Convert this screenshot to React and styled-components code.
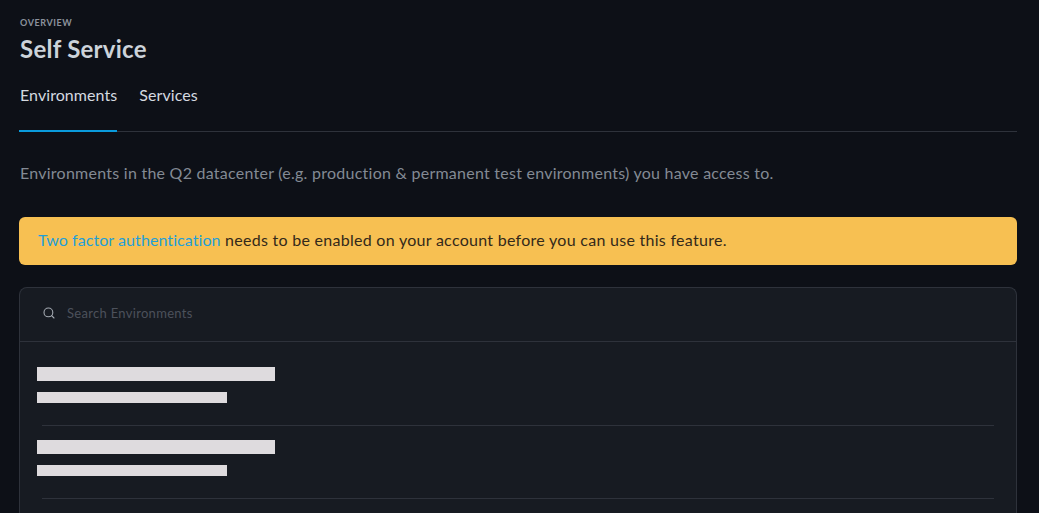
import React from 'react'
import styled, { createGlobalStyle } from 'styled-components'

const GlobalStyle = createGlobalStyle`
  html, body {
    margin: 0;
    height: 100%;
    overflow: hidden;
    background: #0d1017;
    font-family: 'Lato', 'Liberation Sans', sans-serif;
  }
`

const Page = styled.div`
  height: 100vh;
  box-sizing: border-box;
  padding: 17px 22px 0 19px;
  display: flex;
  flex-direction: column;
`

const Eyebrow = styled.div`
  padding-left: 1px;
  font-size: 9px;
  line-height: 12px;
  font-weight: 700;
  letter-spacing: 0.6px;
  color: #8b929c;
`

const Title = styled.h1`
  margin: 4px 0 0;
  padding-left: 1px;
  font-size: 24px;
  line-height: 32px;
  font-weight: 700;
  letter-spacing: 0.25px;
  color: #ccd3da;
`

const Tabs = styled.div`
  display: flex;
  gap: 21px;
  margin-top: 13px;
  border-bottom: 1px solid #2e323b;
`

const Tab = styled.div`
  height: 54px;
  box-sizing: border-box;
  padding: 6px 0 0 1px;
  margin-bottom: -1px;
  font-size: 16px;
  line-height: 22px;
  letter-spacing: 0.07px;
  color: #d5dae0;
  border-bottom: 2px solid ${(p) => (p.$active ? '#0a9bdc' : 'transparent')};
`

const Intro = styled.p`
  margin: 30px 0 0;
  padding-left: 1px;
  font-size: 16px;
  line-height: 22px;
  letter-spacing: 0.25px;
  color: #838a94;
`

const Alert = styled.div`
  margin-top: 33px;
  height: 48px;
  flex: none;
  box-sizing: border-box;
  padding: 0 19px 4px;
  display: flex;
  align-items: center;
  white-space: pre;
  background: #f7c052;
  border-radius: 6px;
  font-size: 16px;
  letter-spacing: 0.28px;
  color: #33291a;
`

const AlertLink = styled.a`
  letter-spacing: 0.08px;
  color: #1f9fd8;
`

const Card = styled.div`
  flex: 1;
  min-height: 0;
  margin-top: 22px;
  background: #171b22;
  border: 1px solid #2e323b;
  border-bottom: 0;
  border-radius: 8px 8px 0 0;
`

const SearchRow = styled.div`
  height: 54px;
  box-sizing: border-box;
  padding: 0 0 4px 23px;
  display: flex;
  align-items: center;
  gap: 12px;
  border-bottom: 1px solid #2e323b;
`

const SearchIcon = styled.svg`
  width: 12px;
  height: 12px;
  flex: none;
  stroke: #a3a9b1;
`

const SearchText = styled.span`
  font-size: 13px;
  line-height: 18px;
  letter-spacing: 0.3px;
  color: #4c515b;
`

const List = styled.div`
  padding: 0 22px 0 17px;
`

const Row = styled.div`
  padding-top: 25px;
  height: 73px;
  box-sizing: border-box;
`

const Divider = styled.div`
  height: 1px;
  margin: 22px 0 0 5px;
  background: #2e323b;
`

const Bar = styled.div`
  background: #dedbde;
  width: ${(p) => p.$width}px;
  height: ${(p) => p.$height}px;
  margin-bottom: ${(p) => p.$gap || 0}px;
`

const rows = [0, 1]

export default function App() {
  return (
    <Page>
      <GlobalStyle />
      <Eyebrow>OVERVIEW</Eyebrow>
      <Title>Self Service</Title>
      <Tabs>
        <Tab $active>Environments</Tab>
        <Tab>Services</Tab>
      </Tabs>
      <Intro>
        Environments in the Q2 datacenter (e.g. production &amp; permanent test environments) you have access to.
      </Intro>
      <Alert>
        <AlertLink>Two factor authentication</AlertLink> needs to be enabled on your account before you can use this feature.
      </Alert>
      <Card>
        <SearchRow>
          <SearchIcon viewBox='0 0 12 12' fill='none' strokeWidth='1.1' strokeLinecap='round'>
            <circle cx='5.4' cy='5.4' r='4.4' />
            <path d='M8.6 8.6 L11 11' />
          </SearchIcon>
          <SearchText>Search Environments</SearchText>
        </SearchRow>
        <List>
          {rows.map((row) => (
            <Row key={row}>
              <Bar $width={238} $height={14} $gap={11} />
              <Bar $width={190} $height={11} />
              <Divider />
            </Row>
          ))}
        </List>
      </Card>
    </Page>
  )
}
